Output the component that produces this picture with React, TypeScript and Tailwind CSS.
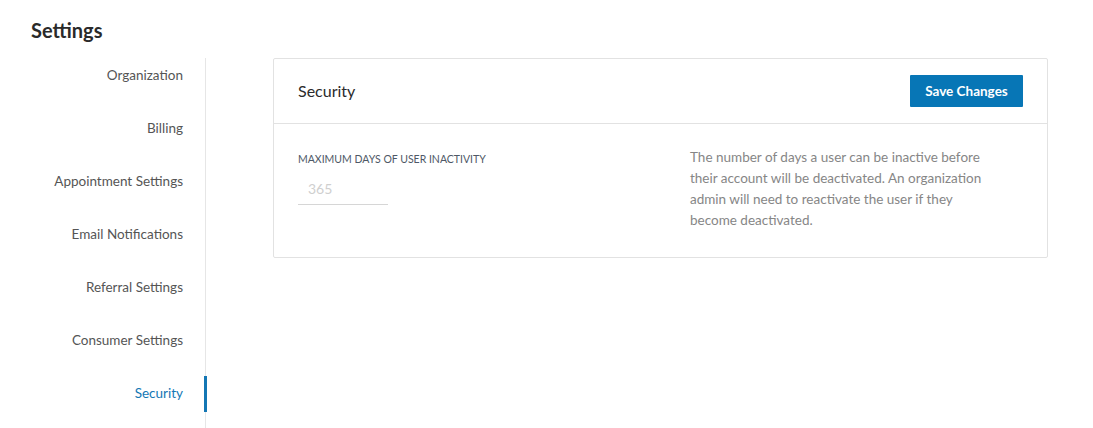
const navItems = [
  'Organization',
  'Billing',
  'Appointment Settings',
  'Email Notifications',
  'Referral Settings',
  'Consumer Settings',
  'Security',
]

function Sidebar({ active }: { active: string }) {
  return (
    <nav className="flex w-[206px] shrink-0 flex-col gap-[17px] border-r border-[#e6e6e6] pb-[16px]">
      {navItems.map((label) => {
        const isActive = label === active
        return (
          <a
            key={label}
            href="#"
            className={
              'relative flex h-[36px] items-center justify-end pb-[1px] pr-[22px] text-[13.5px] ' +
              (isActive ? 'text-[#1477b4]' : 'text-[#555]')
            }
          >
            {label}
            {isActive && <span className="absolute right-[-2px] top-0 h-full w-[3px] bg-[#1477b4]" />}
          </a>
        )
      })}
    </nav>
  )
}

function SecurityCard() {
  return (
    <section className="w-[775px] rounded-[2px] border border-[#e2e2e2] bg-white">
      <header className="flex h-[65px] items-center justify-between border-b border-[#e2e2e2] px-[24px]">
        <h2 className="text-[16px] text-[#2b2b2b]">Security</h2>
        <button className="h-[32px] w-[113px] rounded-[1px] bg-[#0776b6] text-[13.5px] font-bold text-white">
          Save Changes
        </button>
      </header>
      <div className="flex h-[133px] px-[24px] pt-[23px]">
        <div className="w-[392px] shrink-0">
          <label className="mt-[5px] block text-[10.5px] leading-[14px] text-[#4e5866]">
            MAXIMUM DAYS OF USER INACTIVITY
          </label>
          <input
            placeholder="365"
            className="mt-[7px] block h-[32px] w-[90px] border-b border-[#d6d6d6] pl-[10px] text-[14px] text-[#333] outline-none placeholder:text-[#cfcfcf]"
          />
        </div>
        <p className="w-[310px] text-[13.5px] leading-[21px] text-[#868686]">
          The number of days a user can be inactive before
          <br />
          their account will be deactivated. An organization
          <br />
          admin will need to reactivate the user if they
          <br />
          become deactivated.
        </p>
      </div>
    </section>
  )
}

export default function App() {
  return (
    <div className="min-h-[428px] bg-white font-['Lato','Liberation_Sans',sans-serif]">
      <h1 className="h-[58px] pl-[31px] pt-[16px] text-[20px] font-bold leading-[28px] text-[#2a2a2a]">Settings</h1>
      <div className="flex">
        <Sidebar active="Security" />
        <main className="pl-[67px]">
          <SecurityCard />
        </main>
      </div>
    </div>
  )
}
